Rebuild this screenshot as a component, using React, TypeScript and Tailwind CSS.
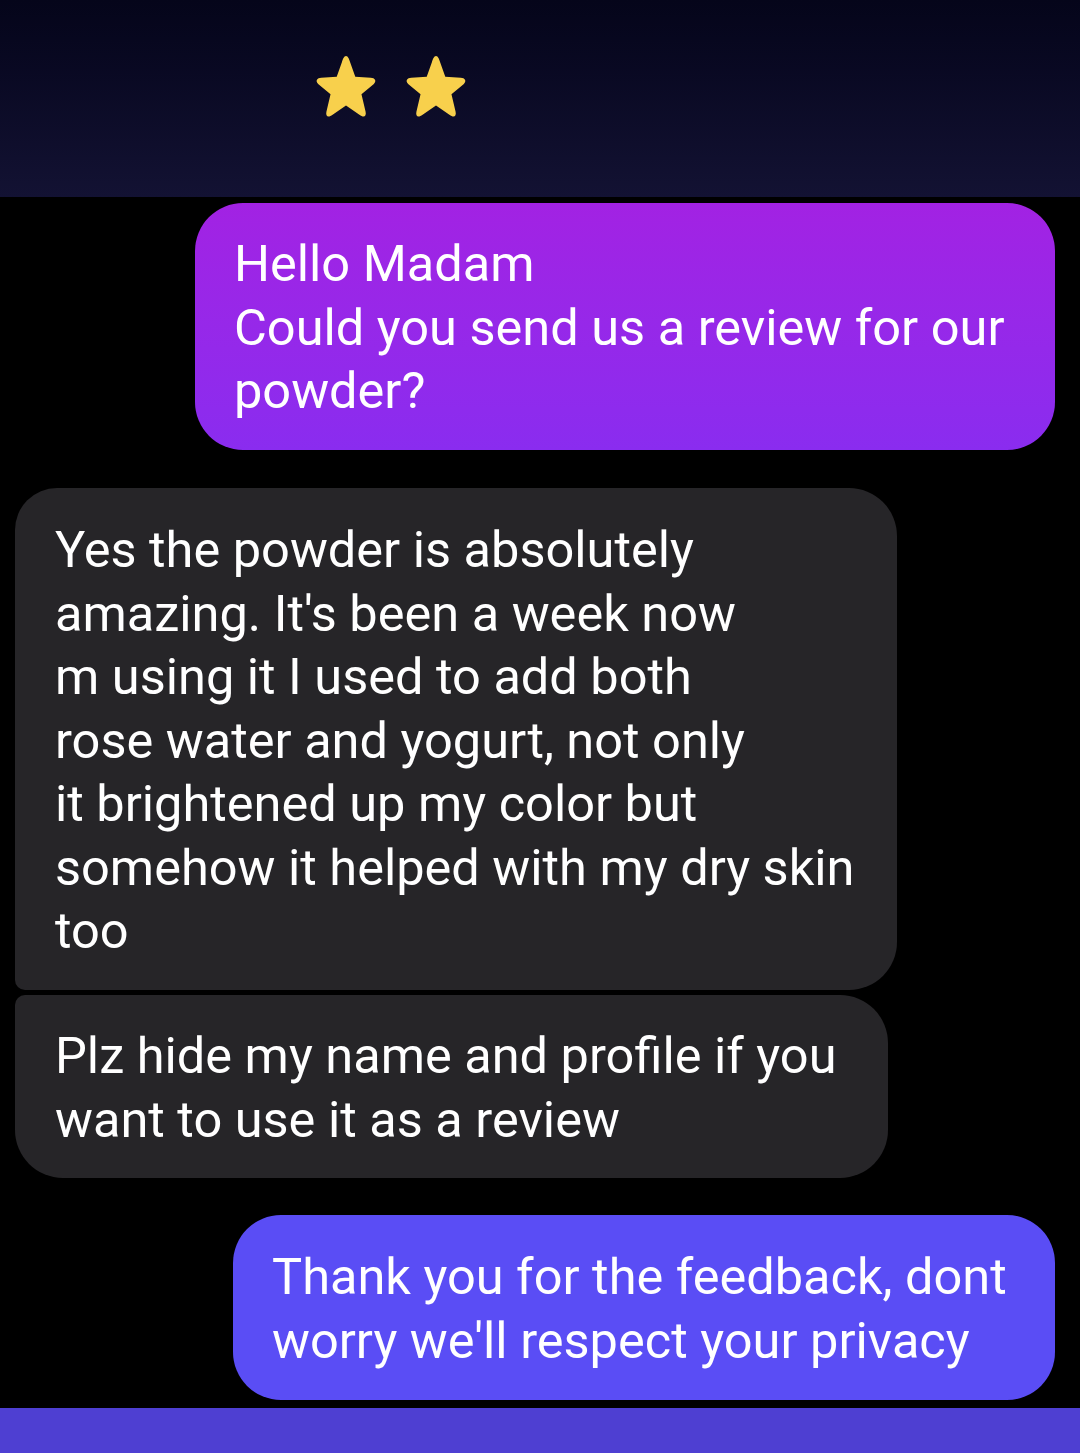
import React from 'react';

const Star = () => (
  <svg viewBox="0 0 64 64" className="w-[68px] h-[66px]">
    <path
      d="M32 2 C34 2 35 5 36 8 L41 22 L56 23 C60 23 62 26 59 29 L47 39 L51 56 C52 61 49 62 45 59 L32 50 L19 59 C15 62 12 61 13 56 L17 39 L5 29 C2 26 4 23 8 23 L23 22 L28 8 C29 5 30 2 32 2 Z"
      fill="#f8d04c"
    />
  </svg>
);

interface Message {
  id: string;
  lines: string[];
}

const outgoingFirst: Message = {
  id: 'hello',
  lines: ['Hello Madam', 'Could you send us a review for our', 'powder?'],
};

const incoming: Message[] = [
  {
    id: 'review',
    lines: [
      'Yes the powder is absolutely',
      "amazing. It's been a week now",
      'm using it I used to add both',
      'rose water and yogurt, not only',
      'it brightened up my color but',
      'somehow it helped with my dry skin',
      'too',
    ],
  },
  {
    id: 'privacy',
    lines: ['Plz hide my name and profile if you', 'want to use it as a review'],
  },
];

const outgoingLast: Message = {
  id: 'thanks',
  lines: ['Thank you for the feedback, dont', "worry we'll respect your privacy"],
};

const Lines = ({ lines }: { lines: string[] }) => (
  <>
    {lines.map((line, i) => (
      <div key={i} className="whitespace-nowrap">
        {line}
      </div>
    ))}
  </>
);

export default function App() {
  return (
    <div
      className="w-[1080px] h-[1453px] bg-black flex flex-col overflow-hidden text-white text-[50.5px] leading-[63.5px]"
      style={{ fontFamily: 'Roboto, "Noto Sans", sans-serif' }}
    >
      <header className="h-[197px] shrink-0 bg-gradient-to-b from-[#05051a] to-[#131233] flex items-start gap-[22px] pl-[312px] pt-[54px]">
        <Star />
        <Star />
      </header>

      <main className="flex-1 flex flex-col">
        <div className="flex justify-end pr-[25px] pt-[6px]">
          <div className="w-[860px] h-[247px] rounded-[48px] bg-gradient-to-b from-[#a222e3] to-[#8a2cef] pl-[39px] pt-[29px]">
            <Lines lines={outgoingFirst.lines} />
          </div>
        </div>

        <div className="flex flex-col pl-[15px] pt-[38px] gap-[5px]">
          <div className="w-[882px] h-[502px] bg-[#262528] rounded-tl-[42px] rounded-tr-[48px] rounded-br-[48px] rounded-bl-[10px] pl-[40px] pt-[30px]">
            <Lines lines={incoming[0].lines} />
          </div>
          <div className="w-[873px] h-[183px] bg-[#262528] rounded-tl-[10px] rounded-tr-[48px] rounded-br-[48px] rounded-bl-[48px] pl-[40px] pt-[29px]">
            <Lines lines={incoming[1].lines} />
          </div>
        </div>

        <div className="flex justify-end pr-[25px] pt-[37px]">
          <div className="w-[822px] h-[185px] rounded-[48px] bg-[#5a4df5] pl-[39px] pt-[30px]">
            <Lines lines={outgoingLast.lines} />
          </div>
        </div>
      </main>

      <footer className="h-[45px] shrink-0 bg-[#4e3fd2]" />
    </div>
  );
}
